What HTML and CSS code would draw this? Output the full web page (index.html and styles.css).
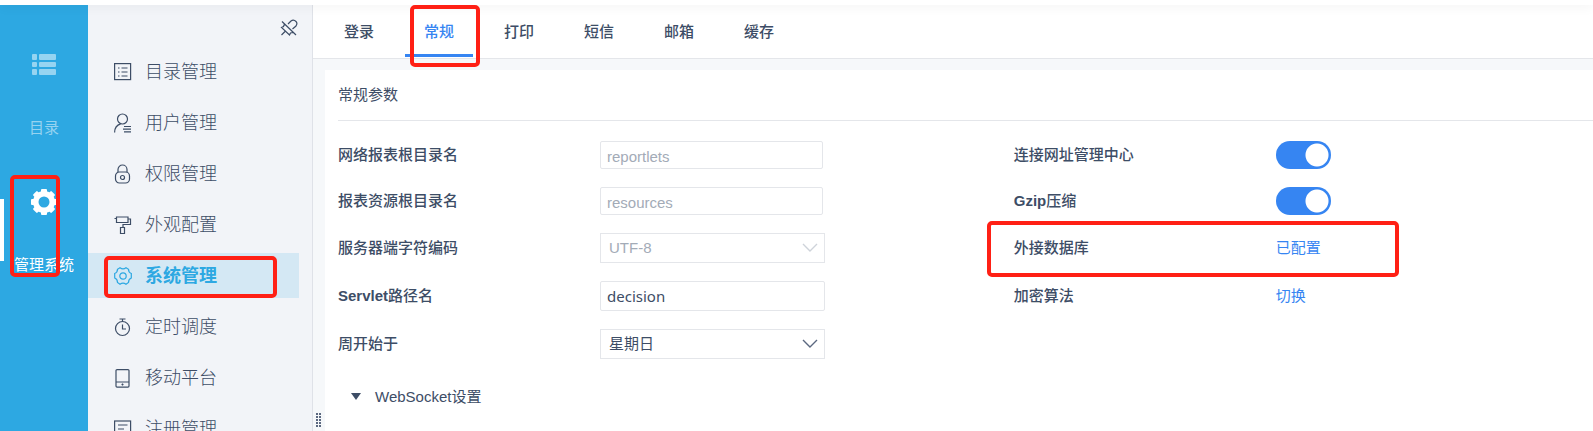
FILE: index.html
```html
<!DOCTYPE html>
<html lang="zh-CN">
<head>
    <meta charset="UTF-8">
    <meta name="viewport" content="width=device-width, initial-scale=1.0">
    <title>系统管理</title>
    <link rel="stylesheet" href="styles.css">
</head>
<body>
    <header class="top-strip"></header>
    <div class="layout">
        <nav class="rail">
            <a class="rail-item" href="#catalog">
                <svg width="26" height="26" viewBox="0 0 26 26" fill="currentColor">
                    <rect x="1" y="2" width="5" height="6" rx="1"/><rect x="8" y="2" width="17" height="6" rx="1"/>
                    <rect x="1" y="10" width="5" height="5" rx="1"/><rect x="8" y="10" width="17" height="5" rx="1"/>
                    <rect x="1" y="17" width="5" height="6" rx="1"/><rect x="8" y="17" width="17" height="6" rx="1"/>
                </svg>
                <span>目录</span>
            </a>
            <a class="rail-item active" href="#manage">
                <svg width="26" height="26" viewBox="0 0 26 26">
                    <g fill="currentColor">
                        <rect x="10" y="0" width="6" height="26" rx="1"/>
                        <rect x="10" y="0" width="6" height="26" rx="1" transform="rotate(45 13 13)"/>
                        <rect x="10" y="0" width="6" height="26" rx="1" transform="rotate(90 13 13)"/>
                        <rect x="10" y="0" width="6" height="26" rx="1" transform="rotate(135 13 13)"/>
                        <circle cx="13" cy="13" r="11"/>
                    </g>
                    <circle cx="13" cy="13" r="5.5" fill="#2da8e2"/>
                </svg>
                <span>管理系统</span>
                <i class="mark mark-rail"></i>
            </a>
        </nav>

        <aside class="sidebar">
            <button class="pin" type="button" aria-label="取消固定">
                <svg width="18" height="18" viewBox="0 0 18 18" fill="none" stroke="currentColor" stroke-width="1.2">
                    <path d="M2 2.500L16 16M4.500 5L3.500 7.500L1.500 8.500L9.500 16L10.500 14L13 13.500M5 12.500L1.500 16M8 5L11 2C13 .5 15 1.500 16 2.500S17 5.500 16 7L12.500 10"/>
                </svg>
            </button>
            <ul class="menu">
                <li><a href="#dir">
                    <svg class="icon" viewBox="0 0 18 18"><rect x=".6" y=".6" width="16" height="16"/><path d="M4 5h1.500M7.500 5h6M4 9h1.500M7.500 9h6M4 13h1.500M7.500 13h6"/></svg>
                    目录管理</a></li>
                <li><a href="#user">
                    <svg class="icon" viewBox="0 0 18 18"><circle cx="8.500" cy="5" r="5"/><path d="M.6 18.500c0-5 2.500-7.500 6-8.600M10 12.500h7M9 15.200h8M10 17.900h7"/></svg>
                    用户管理</a></li>
                <li><a href="#auth">
                    <svg class="icon" viewBox="0 0 18 18"><path d="M4 7V4.500a4.500 4.500 0 0 1 9 0V7"/><rect x="1.500" y="7" width="14" height="11" rx="4"/><circle cx="8.500" cy="12.500" r="2"/></svg>
                    权限管理</a></li>
                <li><a href="#look">
                    <svg class="icon" viewBox="0 0 18 18"><path d="M2.500 1h11.500v5.500h-11.500zM.5 2.500h2M14 3h2.500v5.500H9V11.500M6.500 11.500h4V17.500h-4z"/></svg>
                    外观配置</a></li>
                <li><a class="active" href="#system">
                    <svg class="icon" viewBox="0 0 18 18"><path d="M6 .8Q9 3 12 .8L14.500 2.300Q14.500 5.500 17.300 6.500V11Q14.500 12 14.500 15.500L12 17.200Q9 15 6 17.200L3.500 15.500Q3.500 12 .7 11V6.500Q3.500 5.500 3.500 2.300z"/><circle cx="9" cy="9" r="3.200"/></svg>
                    系统管理</a><i class="mark mark-menu"></i></li>
                <li><a href="#timer">
                    <svg class="icon" viewBox="0 0 18 18"><circle cx="8.500" cy="10.500" r="7"/><path d="M5.500 1h6M8.500 1v2.500M8.500 6.500v4.500H12"/></svg>
                    定时调度</a></li>
                <li><a href="#mobile">
                    <svg class="icon" viewBox="0 0 18 18"><rect x="2" y=".6" width="13" height="17.500" rx="1"/><path d="M2 13h13M8.500 14.500v2M7.500 15.500h2"/></svg>
                    移动平台</a></li>
                <li><a href="#register">
                    <svg class="icon" viewBox="0 0 18 18"><rect x=".6" y="1" width="16" height="16"/><path d="M4 5h9.500M4 9h6"/></svg>
                    注册管理</a></li>
            </ul>
        </aside>

        <main class="main">
            <nav class="tabs">
                <a href="#login">登录</a>
                <a class="active" href="#general">常规<i class="mark mark-tab"></i></a>
                <a href="#print">打印</a>
                <a href="#sms">短信</a>
                <a href="#mail">邮箱</a>
                <a href="#cache">缓存</a>
            </nav>
            <div class="splitter"></div>
            <section class="card">
                <h2>常规参数</h2>
                <form class="form">
                    <div class="row">
                        <label for="reportlets">网络报表根目录名</label>
                        <input class="text" id="reportlets" type="text" value="reportlets" disabled>
                    </div>
                    <div class="row">
                        <label for="center">连接网址管理中心</label>
                        <input class="switch" id="center" type="checkbox" checked>
                    </div>
                    <div class="row">
                        <label for="resources">报表资源根目录名</label>
                        <input class="text" id="resources" type="text" value="resources" disabled>
                    </div>
                    <div class="row">
                        <label for="gzip"><b>Gzip</b>压缩</label>
                        <input class="switch" id="gzip" type="checkbox" checked>
                    </div>
                    <div class="row">
                        <label for="charset">服务器端字符编码</label>
                        <div class="select">
                            <select id="charset" disabled><option>UTF-8</option></select>
                            <svg width="16" height="10" viewBox="0 0 16 10"><path d="M1 1l7 7 7-7"/></svg>
                        </div>
                    </div>
                    <div class="row">
                        <span class="name">外接数据库</span>
                        <a href="#database">已配置</a>
                        <i class="mark mark-row"></i>
                    </div>
                    <div class="row">
                        <label for="servlet"><b>Servlet</b>路径名</label>
                        <input class="text editable" id="servlet" type="text" value="decision">
                    </div>
                    <div class="row">
                        <span class="name">加密算法</span>
                        <a href="#encrypt">切换</a>
                    </div>
                    <div class="row">
                        <label for="week">周开始于</label>
                        <div class="select">
                            <select id="week"><option>星期日</option></select>
                            <svg width="16" height="10" viewBox="0 0 16 10"><path d="M1 1l7 7 7-7"/></svg>
                        </div>
                    </div>
                </form>
                <button class="fold" type="button">
                    <svg width="10" height="8" viewBox="0 0 10 8"><path d="M0 0h10L5 7z" fill="currentColor"/></svg>
                    WebSocket设置
                </button>
            </section>
        </main>
    </div>
</body>
</html>
```

FILE: styles.css
```css
* {
    box-sizing: border-box;
}
body {
    margin: 0;
    height: 100vh;
    display: flex;
    flex-direction: column;
    overflow: hidden;
    font-family: "Liberation Sans", "Noto Sans CJK SC", sans-serif;
    font-size: 15px;
    line-height: 20px;
    color: #3d4d66;
    background: #fff;
}
a {
    color: inherit;
    text-decoration: none;
}
button, input, select {
    font: inherit;
    color: inherit;
}
.top-strip {
    position: relative;
    flex: none;
    height: 5px;
    background: #fff;
    box-shadow: 0 1px 12px rgba(0, 0, 0, 0.08);
    z-index: 1;
}
.layout {
    flex: 1;
    min-height: 0;
    display: flex;
}

/* left rail */
.rail {
    flex: none;
    width: 88px;
    padding-top: 47px;
    background: #2da8e2;
}
.rail-item {
    position: relative;
    display: flex;
    flex-direction: column;
    align-items: center;
    gap: 40px;
    height: 137px;
    color: rgba(255, 255, 255, 0.5);
}
.rail-item.active {
    color: #fff;
}
.rail-item.active::before {
    content: "";
    position: absolute;
    left: 0;
    top: 10px;
    width: 4px;
    height: 62px;
    background: #fff;
}

/* sidebar */
.sidebar {
    flex: none;
    display: flex;
    flex-direction: column;
    width: 225px;
    overflow: hidden;
    border-right: 1px solid #dfe2e8;
    background: #f2f4f8;
}
.pin {
    flex: none;
    align-self: flex-end;
    height: 18px;
    margin: 14px 14px 12px;
    padding: 0;
    border: 0;
    background: none;
}
.pin svg {
    display: block;
}
.menu {
    list-style: none;
    margin: 0;
    padding: 0 13px 0 0;
}
.menu li {
    position: relative;
    margin-bottom: 6px;
}
.menu a {
    display: flex;
    align-items: center;
    gap: 13px;
    height: 45px;
    padding-left: 26px;
    font-size: 18px;
    font-weight: 300;
}
.menu a.active {
    color: #2da8e2;
    font-weight: bold;
    background: #d4e8f4;
}
.icon {
    width: 18px;
    height: 18px;
    overflow: visible;
    fill: none;
    stroke: currentColor;
    stroke-width: 1.2;
}

/* content */
.main {
    position: relative;
    flex: 1;
    min-width: 0;
    display: flex;
    flex-direction: column;
    background: #f6f8fa;
}
.tabs {
    flex: none;
    display: flex;
    gap: 12px;
    height: 54px;
    padding-left: 12px;
    border-bottom: 1px solid #e4e6ea;
    background: #fff;
}
.tabs a {
    position: relative;
    width: 68px;
    line-height: 53px;
    text-align: center;
    font-weight: 500;
}
.tabs a.active {
    color: #3685f2;
}
.tabs a.active::after {
    content: "";
    position: absolute;
    left: 0;
    right: 0;
    bottom: 1px;
    height: 3px;
    background: #3685f2;
}
.splitter {
    position: absolute;
    left: 3px;
    bottom: 3px;
    width: 6px;
    height: 15px;
    background: linear-gradient(#5b6880 2px, transparent 2px) 0 0 / 3px 3px;
    -webkit-mask: linear-gradient(90deg, #000 2px, transparent 2px) 0 0 / 3px 3px;
    mask: linear-gradient(90deg, #000 2px, transparent 2px) 0 0 / 3px 3px;
}
.card {
    flex: 1;
    min-height: 0;
    margin: 11px 0 0 12px;
    padding-left: 13px;
    background: #fff;
}
.card h2 {
    margin: 0;
    border-bottom: 1px solid #e4e6ea;
    font-size: 15px;
    font-weight: normal;
    line-height: 50px;
}
.form {
    display: grid;
    grid-template-columns: 7fr 6fr;
    row-gap: 18px;
    padding-top: 20px;
}
.row {
    position: relative;
    display: flex;
    align-items: center;
}
.row label, .name {
    width: 262px;
    font-weight: 500;
}
.row a {
    color: #3685f2;
}
.text {
    width: 223px;
    height: 28px;
    padding: 3px 6px 0;
    border: 1px solid #e4e6ea;
    border-radius: 2px;
    background: #fff;
}
.text.editable {
    width: 225px;
    height: 30px;
    padding-top: 0;
    font-family: "Noto Sans", sans-serif;
}
.text:disabled, select:disabled {
    color: #a3abb7;
    opacity: 1;
}
.select {
    position: relative;
    width: 225px;
}
.select select {
    display: block;
    width: 100%;
    height: 30px;
    padding: 0 8px;
    border: 1px solid #e4e6ea;
    border-radius: 0;
    background: #fff;
    appearance: none;
}
.select svg {
    position: absolute;
    right: 7px;
    top: 10px;
    fill: none;
    stroke: #5b6880;
    stroke-width: 1.4;
    pointer-events: none;
}
.select select:disabled + svg {
    stroke: #ced3da;
}
.switch {
    appearance: none;
    width: 55px;
    height: 28px;
    margin: 0;
    border-radius: 14px;
    background: #3685f2 radial-gradient(circle at 41px 14px, #fff 11px, transparent 12px);
}
.fold {
    display: flex;
    align-items: center;
    gap: 14px;
    margin-top: 28px;
    padding: 0 0 0 13px;
    border: 0;
    background: none;
}

/* red highlight frames */
.mark {
    position: absolute;
    z-index: 2;
    border: 4px solid #ff2015;
    border-radius: 5px;
    pointer-events: none;
}
.mark-rail {
    left: 10px;
    top: -14px;
    width: 50px;
    height: 102px;
}
.mark-menu {
    left: 16px;
    top: 3px;
    width: 173px;
    height: 42px;
}
.mark-tab {
    left: 5px;
    top: 0;
    width: 70px;
    height: 62px;
}
.mark-row {
    left: -27px;
    top: -12px;
    width: 412px;
    height: 56px;
}
```
